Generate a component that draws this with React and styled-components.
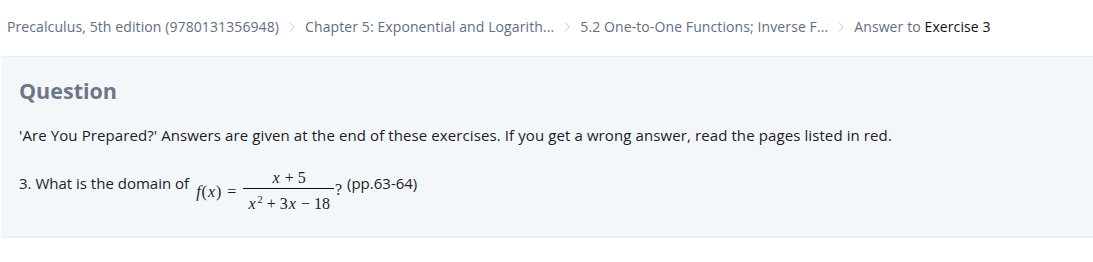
import React from "react";
import styled, { createGlobalStyle } from "styled-components";

const GlobalStyle = createGlobalStyle`
  body {
    margin: 0;
    background: #fff;
    font-family: "Open Sans", "Noto Sans", sans-serif;
  }
`;

const crumbs = [
  "Precalculus, 5th edition (9780131356948)",
  "Chapter 5: Exponential and Logarith...",
  "5.2 One-to-One Functions; Inverse F...",
];

export default function App() {
  return (
    <Page>
      <GlobalStyle />
      <Breadcrumbs>
        {crumbs.map((c) => (
          <React.Fragment key={c}>
            <Crumb>{c}</Crumb>
            <Chevron viewBox="0 0 6 10">
              <path d="M1 0.5 L5 5 L1 9.5" fill="none" stroke="currentColor" strokeWidth="1" />
            </Chevron>
          </React.Fragment>
        ))}
        <Crumb>
          Answer to <Current>Exercise 3</Current>
        </Crumb>
      </Breadcrumbs>
      <Panel>
        <Heading>Question</Heading>
        <Body>
          'Are You Prepared?' Answers are given at the end of these exercises. If you get a wrong answer, read the pages listed in red.
        </Body>
        <Exercise>
          <Text>3. What is the domain of</Text>
          <Math>
            <Lhs>
              <Var>f</Var>(<Var>x</Var>)<Op>=</Op>
            </Lhs>
            <Frac>
              <Num>
                <Var>x</Var>
                <Op small>+</Op>5
              </Num>
              <Den>
                <Var>x</Var>
                <sup>2</sup>
                <Op small>+</Op>3<Var>x</Var>
                <Op small>−</Op>18
              </Den>
            </Frac>
            <Q>?</Q>
          </Math>
          <Text>(pp.63-64)</Text>
        </Exercise>
      </Panel>
    </Page>
  );
}

const Page = styled.div`
  width: 1093px;
`;

const Breadcrumbs = styled.nav`
  display: flex;
  align-items: center;
  height: 52px;
  padding-left: 7px;
  font-size: 14px;
  letter-spacing: 0.1px;
  color: #5f6e80;
`;

const Crumb = styled.span`
  white-space: nowrap;
`;

const Current = styled.span`
  color: #111;
`;

const Chevron = styled.svg`
  width: 6px;
  height: 10px;
  margin: 1px 10px 0;
  color: #c6ced7;
`;

const Panel = styled.section`
  margin: 4px 0 0 1px;
  background: #f4f7fa;
  border-top: 1px solid #e6eef7;
  border-bottom: 2px solid #e9f0f7;
  padding: 20px 18px 0;
  box-sizing: border-box;
  height: 182px;
`;

const Heading = styled.h2`
  margin: 0;
  font-size: 21.5px;
  font-weight: 700;
  color: #6c7785;
  line-height: 28px;
`;

const Body = styled.p`
  margin: 20px 0 0;
  font-size: 15px;
  letter-spacing: 0.1px;
  line-height: 20px;
  color: #1b1b2a;
`;

const Exercise = styled.div`
  display: flex;
  align-items: flex-start;
  margin-top: 25px;
  font-size: 15px;
  color: #1b1b2a;
`;

const Text = styled.span`
  margin-top: 3px;
  line-height: 20px;
  white-space: nowrap;
`;

const Math = styled.span`
  display: inline-flex;
  align-items: center;
  font-family: "Liberation Serif", "DejaVu Serif", serif;
  font-size: 16px;
  margin: 0 5px 0 6px;
  sup {
    font-size: 10.5px;
    vertical-align: 6px;
    margin-left: 1px;
  }
`;

const Lhs = styled.span`
  padding-top: 2px;
  white-space: nowrap;
`;

const Var = styled.i`
  font-style: italic;
  padding: 0 1px;
`;

const Op = styled.span`
  margin: 0 ${(p) => (p.small ? 4 : 6)}px;
`;

const Frac = styled.span`
  display: inline-flex;
  flex-direction: column;
  align-items: center;
  margin: 0 0 0 1px;
  line-height: 16px;
`;

const Num = styled.span`
  padding: 0 4px 2px;
  border-bottom: 1px solid #111;
  align-self: stretch;
  text-align: center;
`;

const Den = styled.span`
  padding: 3px 4px 0;
`;

const Q = styled.span`
  align-self: center;
  margin: -2px 0 0 1px;
`;
